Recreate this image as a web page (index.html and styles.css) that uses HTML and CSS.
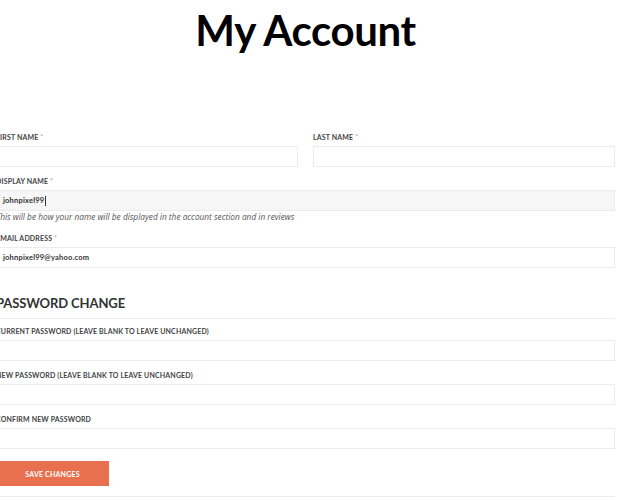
FILE: index.html
```html
<!DOCTYPE html>
<html lang="en">
<head>
    <meta charset="UTF-8">
    <meta name="viewport" content="width=device-width, initial-scale=1.0">
    <title>My Account</title>
    <link rel="stylesheet" href="styles.css">
</head>
<body>
    <div class="account">
        <h1 class="page-title">My Account</h1>

        <form class="account-form">
            <div class="row">
                <div class="field">
                    <label>First name <span class="req">*</span></label>
                    <input type="text" class="input">
                </div>
                <div class="field">
                    <label>Last name <span class="req">*</span></label>
                    <input type="text" class="input">
                </div>
            </div>

            <div class="field field-display">
                <label>Display name <span class="req">*</span></label>
                <div class="input input-focus">johnpixel99<span class="caret"></span></div>
                <p class="hint">This will be how your name will be displayed in the account section and in reviews</p>
            </div>

            <div class="field">
                <label>Email address <span class="req">*</span></label>
                <div class="input">johnpixel99@yahoo.com</div>
            </div>

            <h3 class="section-title">Password change</h3>

            <div class="field">
                <label>Current password (leave blank to leave unchanged)</label>
                <div class="input"></div>
            </div>
            <div class="field">
                <label>New password (leave blank to leave unchanged)</label>
                <div class="input"></div>
            </div>
            <div class="field">
                <label>Confirm new password</label>
                <div class="input"></div>
            </div>

            <div class="actions">
                <button type="button" class="btn-save">Save changes</button>
            </div>
        </form>
    </div>
</body>
</html>
```

FILE: styles.css
```css
body {
    margin: 0;
    background-color: #fff;
    font-family: Lato, "Open Sans", sans-serif;
    color: #333;
    overflow: hidden;
}

.account {
    width: 619px;
    margin-left: -4px;
}

.page-title {
    margin: 0;
    padding-top: 4px;
    text-align: center;
    font-size: 42px;
    line-height: 52px;
    font-weight: 700;
    letter-spacing: -0.4px;
    color: #000;
}

.account-form {
    margin-top: 76px;
}

.row {
    display: flex;
    gap: 15px;
}

.row .field {
    flex: 1;
}

.field {
    margin-bottom: 9px;
}

.field label {
    display: block;
    font-size: 7px;
    line-height: 10px;
    font-weight: 700;
    text-transform: uppercase;
    letter-spacing: 0.15px;
    color: #444;
    margin-bottom: 4px;
}

.req {
    color: #aaa;
    font-weight: 400;
}

.input {
    display: block;
    box-sizing: border-box;
    width: 100%;
    height: 21px;
    margin: 0;
    padding: 0 6px;
    border: 1px solid #ececec;
    background-color: #fff;
    font-family: inherit;
    font-size: 7.5px;
    line-height: 19px;
    font-weight: 700;
    letter-spacing: 0.2px;
    color: #333;
}

.input-focus {
    background-color: #f6f6f6;
}

.caret {
    display: inline-block;
    width: 1px;
    height: 10px;
    margin-left: 1px;
    vertical-align: middle;
    background-color: #333;
}

.hint {
    margin: 0;
    padding-bottom: 1px;
    font-family: "Open Sans", sans-serif;
    font-size: 8.3px;
    line-height: 12px;
    font-style: italic;
    color: #555;
}

.section-title {
    margin: 26px 0 7px;
    padding-bottom: 6px;
    border-bottom: 1px solid #ececec;
    font-size: 13px;
    line-height: 18px;
    font-weight: 700;
    letter-spacing: -0.1px;
    text-transform: uppercase;
    color: #333;
}

.actions {
    margin-top: 12px;
    padding-bottom: 10px;
    border-bottom: 1px solid #ececec;
}

.btn-save {
    display: block;
    width: 113px;
    height: 25px;
    padding: 0;
    border: none;
    background-color: #e8704f;
    color: #fff;
    font-family: inherit;
    font-size: 7px;
    font-weight: 700;
    text-transform: uppercase;
    letter-spacing: 0.2px;
    cursor: pointer;
}
```
